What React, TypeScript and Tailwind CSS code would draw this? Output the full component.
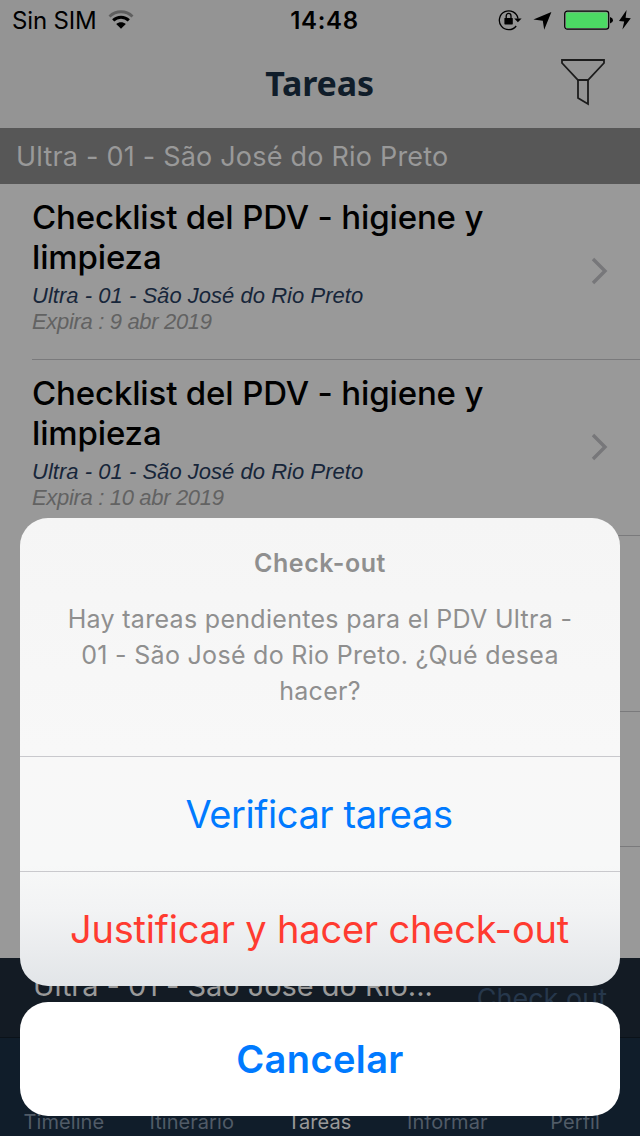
const tasks = [
  { title: 'Checklist del PDV - higiene y limpieza', place: 'Ultra - 01 - São José do Rio Preto', expires: '9 abr 2019' },
  { title: 'Checklist del PDV - higiene y limpieza', place: 'Ultra - 01 - São José do Rio Preto', expires: '10 abr 2019' },
]

const tabs = ['Timeline', 'Itinerario', 'Tareas', 'Informar', 'Perfil']

function StatusBar() {
  return (
    <div className="flex h-10 items-center justify-between pl-3 pr-[9px] text-black">
      <div className="flex w-[200px] items-center gap-[11px]">
        <span className="pt-0.5 text-[24px] leading-10 tracking-[-0.15px]">Sin SIM</span>
        <svg width="26" height="20" viewBox="0 0 26 20" fill="none" className="shrink-0">
          <path d="M1.5 6.4C8 .2 18 .2 24.5 6.4" stroke="#5f5f5f" strokeWidth="2.8" />
          <path d="M5.2 10.4C9.5 6.2 16.5 6.2 20.8 10.4" stroke="currentColor" strokeWidth="3" />
          <path d="M13 18.8L8.2 14C11 11.5 15 11.5 17.8 14Z" fill="currentColor" />
        </svg>
      </div>
      <span className="pl-1.5 pt-0.5 text-[24px] font-semibold leading-10 tracking-[0.7px]">14:48</span>
      <div className="flex w-[200px] items-center justify-end">
        <svg width="24" height="22" viewBox="0 0 24 22" fill="none">
          <path d="M18.2 17A9.4 9.4 0 1 1 20 9.6" stroke="currentColor" strokeWidth="1.3" />
          <path d="M16.2 9.4H23.6L19.9 13.2Z" fill="currentColor" />
          <rect x="6.4" y="9" width="8.4" height="6.4" rx=".6" fill="currentColor" />
          <path d="M8.2 9.4V7A2.4 2.6 0 0 1 13 7V9.4" stroke="currentColor" strokeWidth="1.3" />
        </svg>
        <svg width="19" height="18" viewBox="0 0 19 18" className="ml-[11px] mt-0.5">
          <path d="M18.4 0L11.2 17.8L9.8 8.8L.4 7.6Z" fill="currentColor" />
        </svg>
        <svg width="49" height="20" viewBox="0 0 49 20" className="ml-3">
          <rect x=".7" y="1.2" width="44" height="18" rx="2.6" fill="none" stroke="currentColor" strokeWidth="1.2" />
          <rect x="2" y="2.5" width="41.4" height="15.4" rx="1.2" fill="#4cd964" />
          <path d="M46 7Q49 8 49 10.2Q49 12.6 46 13.6Z" fill="currentColor" />
        </svg>
        <svg width="12" height="20" viewBox="0 0 12 20" className="ml-1.5">
          <path d="M7.6 0L0 11L5.2 11.6L3.4 19.6L11.8 8.2L6.6 7.7Z" fill="currentColor" />
        </svg>
      </div>
    </div>
  )
}

function NavBar() {
  return (
    <div className="flex h-[88px] items-center justify-between px-[35px]">
      <div className="w-11" />
      <h1 className="pb-0.5 pr-px font-['Noto_Sans'] text-[34px] font-bold leading-[86px] tracking-[-0.15px] text-[#101d2a]">Tareas</h1>
      <svg width="44" height="48" viewBox="0 0 44 48" fill="none" stroke="#1c1c1c" strokeWidth="1.8" className="mb-1">
        <path d="M1 2H43V5L27 22H17L1 5Z" />
        <path d="M17 22V40L27 46V22" />
      </svg>
    </div>
  )
}

function TaskRow({ title, place, expires }: { title: string; place: string; expires: string }) {
  return (
    <li className="ml-8 flex h-44 items-center border-b border-[#7a7a7c]">
      <div className="h-full w-[500px] pt-[13px]">
        <h2 className="text-[33px] font-medium leading-10 tracking-[-0.15px] text-black">{title}</h2>
        <p className="mt-[6px] whitespace-nowrap font-['Liberation_Sans'] text-[22px] italic leading-[26px] tracking-[0.03px] text-[#17263a]">{place}</p>
        <p className="whitespace-nowrap font-['Liberation_Sans'] text-[22px] italic leading-[26px] tracking-[-0.33px] text-[#626262]">Expira : {expires}</p>
      </div>
      <svg width="18" height="28" viewBox="0 0 18 28" fill="none" className="mb-0.5 ml-[59px]">
        <path d="M2 2L14 14L2 26" stroke="#77777a" strokeWidth="3.4" />
      </svg>
    </li>
  )
}

function ActionSheet() {
  return (
    <div className="absolute inset-x-5 bottom-5 flex flex-col gap-4 text-center">
      <div className="flex h-[468px] flex-col rounded-[28px] bg-[linear-gradient(180deg,#f5f5f5_0%,#f8f8f8_50%,#f7f8f8_74%,#f2f3f4_84%,#e2e5e8_100%)]">
        <div className="h-[238px] pt-[29px] text-[#8f8f8f]">
          <h3 className="text-[25px] font-semibold leading-8 tracking-[0.55px]">Check-out</h3>
          <p className="mt-[22px] text-[25px] leading-9 tracking-[0.3px]">
            Hay tareas pendientes para el PDV Ultra -<br />
            01 - São José do Rio Preto. ¿Qué desea<br />
            hacer?
          </p>
        </div>
        <button className="h-[115px] border-t border-[#c9c9cd] pr-0.5 text-[38px] tracking-[-0.42px] text-[#007aff]">Verificar tareas</button>
        <button className="h-[115px] border-t border-[#c9c9cd] pr-px text-[38px] tracking-[-0.2px] text-[#ff3b30]">Justificar y hacer check-out</button>
      </div>
      <button className="h-[114px] rounded-[28px] bg-white text-[38px] font-semibold tracking-[0.4px] text-[#007aff]">Cancelar</button>
    </div>
  )
}

export default function App() {
  return (
    <div className="relative flex h-[1136px] w-[640px] flex-col overflow-hidden bg-[#999999] font-['Inter',sans-serif]">
      <header className="bg-[#949494]">
        <StatusBar />
        <NavBar />
      </header>
      <div className="h-14 bg-[#575757] pl-4 text-[27px] leading-[57px] tracking-[0.21px] text-[#999999]">Ultra - 01 - São José do Rio Preto</div>
      <ul className="flex-1">
        {tasks.map((task) => (
          <TaskRow key={task.expires} {...task} />
        ))}
        <li className="ml-8 h-44 border-b border-[#7a7a7c]" />
        <li className="ml-8 h-[135px] border-b border-[#7a7a7c]" />
      </ul>
      <div className="flex h-20 items-start justify-between border-b border-[#0b1219] bg-[#131b24] px-[33px]">
        <span className="pt-2 text-[29px] leading-10 tracking-[-0.05px] text-[#999999]">Ultra - 01 - São José do Rio...</span>
        <span className="pt-[21px] text-[27px] leading-10 text-[#26374b]">Check out</span>
      </div>
      <nav className="grid h-[98px] grid-cols-5 items-end bg-[#101d2a] pb-px pr-px text-center text-[20px] leading-[26px] tracking-[0.06px]">
        {tabs.map((tab) => (
          <span key={tab} className={tab === 'Tareas' ? 'text-[#999999]' : 'text-[#505b67]'}>{tab}</span>
        ))}
      </nav>
      <ActionSheet />
    </div>
  )
}
